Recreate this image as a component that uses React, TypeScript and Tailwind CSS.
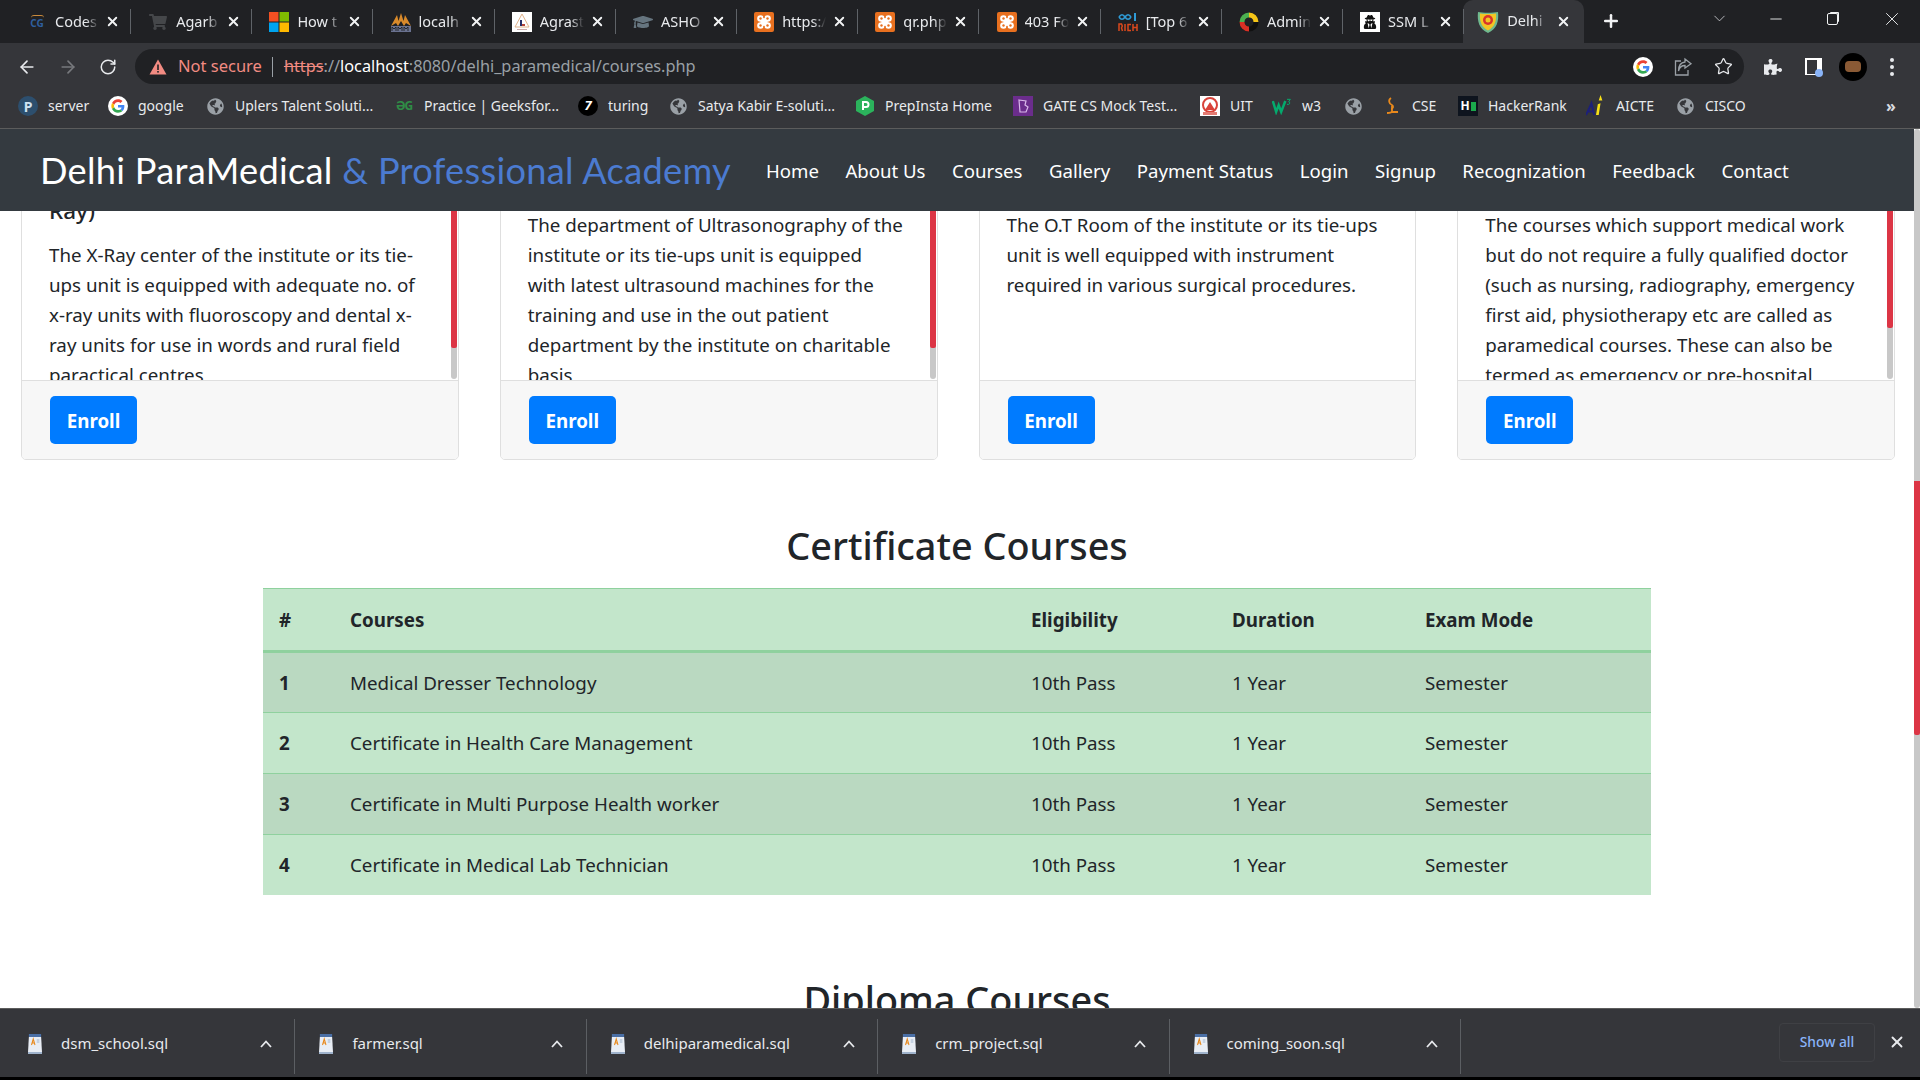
import React from 'react';
import { ArrowLeft, ArrowRight, RotateCw, Star, X, Plus, ChevronDown, Minus } from 'lucide-react';
import { FaGlobeAmericas, FaGraduationCap, FaPuzzlePiece, FaShoppingCart, FaUserSecret } from 'react-icons/fa';

function GoogleG({ size = 20 }: { size?: number }) {
  return (
    <svg width={size} height={size} viewBox="0 0 48 48">
      <circle cx="24" cy="24" r="24" fill="#fff" />
      <g transform="translate(8 8) scale(0.667)">
        <path fill="#EA4335" d="M24 9.5c3.5 0 6.7 1.2 9.2 3.6l6.9-6.9C35.9 2.4 30.5 0 24 0 14.6 0 6.5 5.4 2.6 13.2l8 6.2C12.4 13.7 17.7 9.5 24 9.5z" />
        <path fill="#4285F4" d="M46.9 24.5c0-1.6-.1-3.100-.4-4.500H24v9h12.900c-.6 3-2.200 5.500-4.800 7.200l7.700 6c4.500-4.200 7.100-10.300 7.100-17.700z" />
        <path fill="#FBBC05" d="M10.500 28.600c-.5-1.400-.8-3-.8-4.600s.3-3.200.8-4.600l-8-6.200C.9 16.500 0 20.100 0 24s.9 7.500 2.600 10.800l7.900-6.200z" />
        <path fill="#34A853" d="M24 48c6.500 0 11.900-2.100 15.900-5.800l-7.700-6c-2.100 1.400-4.900 2.300-8.200 2.300-6.300 0-11.600-4.200-13.500-9.900l-8 6.200C6.500 42.600 14.600 48 24 48z" />
      </g>
    </svg>
  );
}

function Xampp() {
  return (
    <svg width="20" height="20" viewBox="0 0 20 20">
      <rect width="20" height="20" rx="2" fill="#e8701f" />
      <g fill="#fff">
        <circle cx="6.500" cy="6.500" r="3.300" />
        <circle cx="13.500" cy="6.500" r="3.300" />
        <circle cx="6.500" cy="13.500" r="3.300" />
        <circle cx="13.500" cy="13.500" r="3.300" />
        <rect x="6.500" y="6.500" width="7" height="7" />
      </g>
      <g fill="#e8701f">
        <circle cx="6.500" cy="6.500" r="1.200" />
        <circle cx="13.500" cy="6.500" r="1.200" />
        <circle cx="6.500" cy="13.500" r="1.200" />
        <circle cx="13.500" cy="13.500" r="1.200" />
        <rect x="9.300" y="2" width="1.400" height="4" />
        <rect x="9.300" y="14" width="1.400" height="4" />
      </g>
    </svg>
  );
}

function Microsoft() {
  return (
    <svg width="20" height="20" viewBox="0 0 20 20">
      <rect width="9.500" height="9.500" fill="#f25022" />
      <rect x="10.500" width="9.500" height="9.500" fill="#7fba00" />
      <rect y="10.500" width="9.500" height="9.500" fill="#00a4ef" />
      <rect x="10.500" y="10.500" width="9.500" height="9.500" fill="#ffb900" />
    </svg>
  );
}

function Pmm() {
  return (
    <svg width="20" height="20" viewBox="0 0 20 20">
      <path d="M0 14 6 3l1.500 6L10 1l2.500 8L14 3l6 11-5-3-2 3-3-5-3 5-2-3z" fill="#d98a2b" />
      <rect x="0" y="14" width="20" height="6" fill="#6a7290" />
      <path d="M1 19v-4l2 2 2-2v4M7 19v-4l2 2 2-2v4M13 19v-4l2 2 2-2v4" stroke="#202124" strokeWidth="0.9" fill="none" />
    </svg>
  );
}

function Agrast() {
  return (
    <svg width="20" height="20" viewBox="0 0 20 20">
      <rect width="20" height="20" fill="#fff" />
      <path d="M10 2 17 15H3z" fill="none" stroke="#e2b48c" strokeWidth="1" />
      <rect x="8" y="8" width="2" height="6" fill="#27306b" />
      <rect x="10" y="12" width="3" height="2" fill="#b5453a" />
      <rect x="5" y="17" width="10" height="1" fill="#caa" />
    </svg>
  );
}

function RichLogo() {
  return (
    <svg width="20" height="20" viewBox="0 0 20 20">
      <path d="M1 5c2-3 4-3 6 0s4 3 6 0" fill="none" stroke="#2f9bd6" strokeWidth="1.600" />
      <path d="M1 5c2 3 4 3 6 0s4-3 6 0" fill="none" stroke="#2f9bd6" strokeWidth="1.600" />
      <rect x="16" y="1" width="2" height="8" fill="#2f9bd6" />
      <path d="M1 19v-7h2.500l.8 2-.8 2 1 3M7 12v7M13 12.500h-3v6h3M15 12v7M19 12v7M15 15.500h4" fill="none" stroke="#d9481c" strokeWidth="1.500" />
    </svg>
  );
}

function AdminRing() {
  return (
    <svg width="20" height="20" viewBox="0 0 20 20">
      <circle cx="10" cy="10" r="7" fill="none" stroke="#111" strokeWidth="5" />
      <path d="M3 10a7 7 0 0 1 7-7" fill="none" stroke="#4caf50" strokeWidth="5" />
      <path d="M10 3a7 7 0 0 1 7 7" fill="none" stroke="#f5c518" strokeWidth="5" />
      <path d="M10 17a7 7 0 0 1-7-7" fill="none" stroke="#d93025" strokeWidth="5" />
      <circle cx="10" cy="10" r="4" fill="#202124" />
    </svg>
  );
}

function Shield() {
  return (
    <svg width="22" height="24" viewBox="0 0 22 24">
      <path d="M1 2c5 1 15 1 20 0 1 9-1 17-10 21C2 19 0 11 1 2z" fill="#6fb98f" />
      <path d="M3 3.500c4 .8 12 .8 16 0 .6 7-1 13.500-8 17-7-3.500-8.600-10-8-17z" fill="#f3c623" />
      <circle cx="11" cy="10" r="5" fill="#d9342b" />
      <circle cx="11" cy="10" r="2.500" fill="#f3c623" />
    </svg>
  );
}

function Box({ children, cls }: { children?: React.ReactNode; cls?: string }) {
  return <span className={'flex items-center justify-center w-5 h-5 shrink-0 ' + (cls || '')}>{children}</span>;
}

const tabs = [
  { title: 'Codes', icon: <span className="relative flex flex-col items-center leading-none text-[10px] font-bold text-[#2f5f9e]"><span className="h-[3px] w-[13px] rounded-t-full border-t border-[#c98a3c]" />CG</span> },
  { title: 'Agarb', icon: <FaShoppingCart size={18} color="#45474a" /> },
  { title: 'How t', icon: <Microsoft /> },
  { title: 'localh', icon: <Pmm /> },
  { title: 'Agrast', icon: <Agrast /> },
  { title: 'ASHO', icon: <FaGraduationCap size={22} color="#66757f" /> },
  { title: 'https:/', icon: <Xampp /> },
  { title: 'qr.php', icon: <Xampp /> },
  { title: '403 Fo', icon: <Xampp /> },
  { title: '[Top 6', icon: <RichLogo /> },
  { title: 'Admin', icon: <AdminRing /> },
  { title: 'SSM L', icon: <span className="flex items-center justify-center w-5 h-5 bg-white"><FaUserSecret size={14} color="#111" /></span> },
];

function Tab({ title, icon }: { title: string; icon: React.ReactNode }) {
  return (
    <div className="flex items-center h-[43px] w-[121.200px] shrink-0 pl-[17px] relative">
      <Box>{icon}</Box>
      <span className="ml-[8px] mr-[5px] mb-[2px] w-[44px] text-[14.500px] leading-[20px] whitespace-nowrap text-[#e8eaed] [mask-image:linear-gradient(to_right,black_70%,transparent_100%)]">{title}</span>
      <X size={15} strokeWidth={3} color="#f1f3f4" className="ml-[1px]" />
      <span className="ml-[10px] w-px h-[25px] bg-[#5f6368]" />
    </div>
  );
}

function TabStrip() {
  return (
    <div className="flex h-[43px] bg-[#202124] pl-[10px]">
      {tabs.map((t) => <Tab key={t.title} title={t.title} icon={t.icon} />)}
      <div className="flex items-center w-[121px] h-[43px] shrink-0 bg-[#35363a] rounded-t-[10px] pl-[14px] ml-[-1px]">
        <Shield />
        <span className="ml-[8px] mb-[2px] w-[40px] whitespace-nowrap text-[14.500px] text-[#e8eaed] [mask-image:linear-gradient(to_right,black_70%,transparent_100%)]">Delhi</span>
        <X size={15} strokeWidth={3} color="#f1f3f4" className="ml-[9px]" />
      </div>
      <Plus size={20} strokeWidth={3} color="#f1f3f4" className="ml-[17px] mt-[11px]" />
      <ChevronDown size={19} strokeWidth={1} color="#dadce0" className="ml-[89px] mt-[9px]" />
      <Minus size={18} strokeWidth={1.200} color="#f1f3f4" className="ml-[38px] mt-[10px]" />
      <span className="ml-[42px] mt-[13px] w-[11px] h-[12px] border border-[#f1f3f4] rounded-[2px] shadow-[2px_-2px_0_-1px_#f1f3f4]" />
      <X size={22} strokeWidth={1} color="#f1f3f4" className="ml-[43px] mt-[8px]" />
    </div>
  );
}

function ShareIcon() {
  return (
    <svg width="20" height="20" viewBox="0 0 20 20" fill="none" stroke="#9aa0a6" strokeWidth="1.300">
      <path d="M8 4H2.500v14H15v-5" />
      <path d="M12 2l6 4.800L12 11V8.500C8.500 8.500 6.500 10 5.500 14c0-5.500 2.500-8.500 6.500-9z" />
    </svg>
  );
}

function Toolbar() {
  return (
    <div className="flex items-center h-[42px] bg-[#35363a] pl-[7px] pt-[5px]">
      <div className="w-[40px] flex justify-center"><ArrowLeft size={20} color="#e8eaed" strokeWidth={2} /></div>
      <div className="w-[41px] flex justify-center"><ArrowRight size={20} color="#77797d" strokeWidth={2} /></div>
      <div className="w-[40px] flex justify-center"><RotateCw size={18} color="#e8eaed" strokeWidth={2} /></div>
      <div className="flex items-center h-[35px] w-[1609px] ml-[7px] rounded-full bg-[#202124] pl-[14px]">
        <svg width="18" height="16" viewBox="0 0 18 16"><path d="M9 0.500 17.500 15.500H0.500z" fill="#f28b82" /><rect x="8.200" y="5.500" width="1.600" height="5.500" fill="#202124" /><rect x="8.200" y="12" width="1.600" height="1.600" fill="#202124" /></svg>
        <span className="ml-[11px] text-[16.500px] text-[#f28b82]">Not secure</span>
        <span className="ml-[10px] w-px h-[20px] bg-[#9aa0a6]" />
        <span className="ml-[11px] text-[16.300px] text-[#9aa0a6] whitespace-nowrap">
          <span className="text-[#f28b82] line-through">https</span>://<span className="text-white">localhost</span>:8080/delhi_paramedical/courses.php
        </span>
        <div className="ml-auto flex items-center pr-px">
          <div className="w-[40px] flex justify-center"><GoogleG size={20} /></div>
          <div className="w-[40px] flex justify-center"><ShareIcon /></div>
          <div className="w-[40px] flex justify-center"><Star size={19} color="#e8eaed" strokeWidth={1.600} /></div>
        </div>
      </div>
      <div className="flex items-center ml-[9px]">
        <div className="w-[40px] flex justify-center"><FaPuzzlePiece size={18} color="#e8eaed" /></div>
        <div className="w-[40px] flex justify-center">
          <span className="relative block w-[17px] h-[17px] bg-white">
            <span className="block w-[10px] h-[14px] bg-[#35363a] mt-[2px] ml-[2px]" />
            <span className="absolute right-[-1px] bottom-[-2px] w-[8px] h-[8px] rounded-full bg-[#8ab4f8]" />
          </span>
        </div>
        <div className="w-[40px] flex justify-center">
          <span className="flex items-center justify-center w-[28px] h-[28px] rounded-full bg-black">
            <span className="w-[16px] h-[11px] rounded-[4px] bg-[#8a5a35]" />
          </span>
        </div>
        <div className="w-[38px] flex flex-col items-center gap-[3px]">
          <span className="w-[4px] h-[4px] rounded-full bg-[#e8eaed]" />
          <span className="w-[4px] h-[4px] rounded-full bg-[#e8eaed]" />
          <span className="w-[4px] h-[4px] rounded-full bg-[#e8eaed]" />
        </div>
      </div>
    </div>
  );
}

const globe = <FaGlobeAmericas size={17} color="#9aa0a6" />;

const bookmarks = [
  { label: 'server', w: 'w-[90px]', icon: <span className="flex items-center justify-center w-[20px] h-[20px] rounded-full bg-[#2d4f6e] text-[14px] font-bold text-[#cfe3f2]">P</span> },
  { label: 'google', w: 'w-[97px]', icon: <GoogleG size={20} /> },
  { label: 'Uplers Talent Soluti...', w: 'w-[189px]', icon: globe },
  { label: 'Practice | Geeksfor...', w: 'w-[184px]', icon: <span className="text-[12px] font-bold text-[#2f8d46] tracking-[-1px]">ƏG</span> },
  { label: 'turing', w: 'w-[90px]', icon: <span className="flex items-center justify-center w-[20px] h-[20px] rounded-full bg-black text-[13px] font-bold italic text-white">7</span> },
  { label: 'Satya Kabir E-soluti...', w: 'w-[187px]', icon: globe },
  { label: 'PrepInsta Home', w: 'w-[158px]', icon: <svg width="18" height="20" viewBox="0 0 18 20"><path d="M9 0l9 5v10l-9 5-9-5V5z" fill="#2bb35c" /><path d="M7 14V6h3a2 2 0 0 1 0 5H7" fill="none" stroke="#fff" strokeWidth="2" /></svg> },
  { label: 'GATE CS Mock Test...', w: 'w-[187px]', icon: <span className="flex items-center justify-center w-[20px] h-[20px] bg-[#6b2d8c]"><svg width="12" height="14" viewBox="0 0 12 14" fill="none" stroke="#d9b8ea" strokeWidth="1.200"><path d="M2 1l7 1-1 4 3 2-2 5-6 0z" /></svg></span> },
  { label: 'UIT', w: 'w-[72px]', icon: <svg width="20" height="20" viewBox="0 0 20 20"><rect width="20" height="20" fill="#fff" /><circle cx="10" cy="9" r="7" fill="none" stroke="#d9433a" strokeWidth="2" /><path d="M5 14l5-8 5 8z" fill="#d9433a" /><rect x="3" y="16" width="14" height="3" fill="#e37b73" /></svg> },
  { label: 'w3', w: 'w-[71px]', icon: <svg width="24" height="18" viewBox="0 0 24 18"><path d="M1 3l4 13 3-8 3 8 5-13" fill="none" stroke="#04aa6d" strokeWidth="3" /><path d="M18 1h4l-2 3c2 0 2 4-2 3" fill="none" stroke="#04aa6d" strokeWidth="1.200" /></svg> },
  { label: '', w: 'w-[39px]', icon: globe },
  { label: 'CSE', w: 'w-[76px]', icon: <svg width="14" height="18" viewBox="0 0 14 18" fill="none" stroke="#e8891c" strokeWidth="1.800"><path d="M6 1C3 3 4 7 7 8c2 1 1 4-1 4M7 8v6c0 2-3 2-5 2M7 15h6" /></svg> },
  { label: 'HackerRank', w: 'w-[128px]', icon: <span className="flex items-center justify-center w-[20px] h-[20px] bg-[#0e141e] gap-px"><span className="text-[12px] leading-none font-bold text-white">H</span><span className="w-[5px] h-[9px] bg-[#1ba94c]" /></span> },
  { label: 'AICTE', w: 'w-[89px]', icon: <svg width="22" height="24" viewBox="0 0 22 24"><path d="M0 22 6 9l3 13M2.500 18h5" fill="none" stroke="#1c1f7a" strokeWidth="2.200" /><path d="M13 10l3-1-2 13h-3zM16 0l2 6-4 0z" fill="#f7e017" /></svg> },
  { label: 'CISCO', w: 'w-[213px]', icon: globe },
];

function Bookmarks() {
  return (
    <div className="flex items-center h-[44px] bg-[#35363a] pl-[18px] border-b border-[#5c5c5c] pb-[1px]">
      {bookmarks.map((b, i) => (
        <div key={i} className={'flex items-center shrink-0 ' + b.w}>
          <span className="flex items-center justify-center w-[20px] h-[22px]">{b.icon}</span>
          {b.label && <span className="ml-[10px] mb-[2px] text-[14px] text-[#e8eaed] whitespace-nowrap">{b.label}</span>}
        </div>
      ))}
      <span className="ml-[-2px] text-[16px] font-bold text-[#dadce0] leading-none">»</span>
    </div>
  );
}

const navLinks = ['Home', 'About Us', 'Courses', 'Gallery', 'Payment Status', 'Login', 'Signup', 'Recognization', 'Feedback', 'Contact'];

function Navbar() {
  return (
    <nav className="flex items-center h-[82px] bg-[#343a40] pl-[40px]">
      <a className="w-[726px] pt-[1px] text-[36.200px] tracking-[0.3px] whitespace-nowrap text-white font-['Lato',sans-serif]">
        Delhi ParaMedical <span className="text-[#4b7bd1]">&amp; Professional Academy</span>
      </a>
      <ul className="flex gap-[26.500px] pt-[2px]">
        {navLinks.map((l) => <li key={l} className="text-[18.600px] text-white whitespace-nowrap">{l}</li>)}
      </ul>
    </nav>
  );
}

const cards = [
  {
    heading: 'Ray)',
    lines: ['The X-Ray center of the institute or its tie-', 'ups unit is equipped with adequate no. of', 'x-ray units with fluoroscopy and dental x-', 'ray units for use in words and rural field', 'paractical centres'],
    thumb: 'h-[167px]',
  },
  {
    lines: ['The department of Ultrasonography of the', 'institute or its tie-ups unit is equipped', 'with latest ultrasound machines for the', 'training and use in the out patient', 'department by the institute on charitable', 'basis'],
    thumb: 'h-[167px]',
  },
  {
    lines: ['The O.T Room of the institute or its tie-ups', 'unit is well equipped with instrument', 'required in various surgical procedures.'],
    thumb: '',
  },
  {
    lines: ['The courses which support medical work', 'but do not require a fully qualified doctor', '(such as nursing, radiography, emergency', 'first aid, physiotherapy etc are called as', 'paramedical courses. These can also be', 'termed as emergency or pre-hospital'],
    thumb: 'h-[147px]',
  },
];

function CourseCard({ heading, lines, thumb }: { heading?: string; lines: string[]; thumb: string }) {
  return (
    <div className="relative border border-[#dfdfdf] rounded-[5px] overflow-hidden bg-white">
      <div className={'h-[199px] overflow-hidden pl-[27px] ' + (heading ? 'pt-[15px]' : 'pt-[29px]')}>
        {heading && <h5 className="h-[44px] text-[22.500px] font-medium leading-[30px] text-[#212529]">{heading}</h5>}
        {lines.map((l) => <p key={l} className="text-[18.750px] leading-[30px] text-[#212529] whitespace-nowrap">{l}</p>)}
      </div>
      {thumb && (
        <div className="absolute right-[1px] top-0 h-[198px] w-[6px] rounded-b-full bg-[#c8c8c8]">
          <div className={'bg-[#dc3545] rounded-b-[2px] ' + thumb} />
        </div>
      )}
      <div className="h-[79px] bg-[#f7f7f7] border-t border-[#dfdfdf] pt-[15px] pl-[28px]">
        <button className="w-[87px] h-[48px] pt-[2px] rounded-[5px] bg-[#007bff] text-[18.750px] font-bold text-white">Enroll</button>
      </div>
    </div>
  );
}

const rows = [
  ['1', 'Medical Dresser Technology'],
  ['2', 'Certificate in Health Care Management'],
  ['3', 'Certificate in Multi Purpose Health worker'],
  ['4', 'Certificate in Medical Lab Technician'],
];

function CertificateTable() {
  return (
    <table className="table-fixed border-collapse w-[1388px] mx-auto bg-[#c3e6cb] text-[18.750px] text-[#212529] [&_td]:pt-[1px] [&_th]:pt-[1px]">
      <thead>
        <tr className="h-[63px] border-t border-b-[3px] border-[#8fd19e]">
          <th className="w-[71px] pl-[16px] text-left font-bold">#</th>
          <th className="w-[681px] pl-[16px] text-left font-bold">Courses</th>
          <th className="w-[201px] pl-[16px] text-left font-bold">Eligibility</th>
          <th className="w-[193px] pl-[16px] text-left font-bold">Duration</th>
          <th className="w-[242px] pl-[16px] text-left font-bold">Exam Mode</th>
        </tr>
      </thead>
      <tbody>
        {rows.map(([n, name], i) => (
          <tr key={n} className={(i === 3 ? 'h-[60px]' : 'h-[61px]') + (i % 2 === 0 ? ' bg-[#bad9c1]' : '') + (i > 0 ? ' border-t border-[#8fd19e]' : '')}>
            <th className="pl-[16px] text-left font-bold">{n}</th>
            <td className="pl-[16px]">{name}</td>
            <td className="pl-[16px]">10th Pass</td>
            <td className="pl-[16px]">1 Year</td>
            <td className="pl-[16px]">Semester</td>
          </tr>
        ))}
      </tbody>
    </table>
  );
}

function FileIcon() {
  return (
    <svg width="14" height="20" viewBox="0 0 16 20" preserveAspectRatio="none">
      <path d="M1 0h14v3H1z" fill="#4a6fa5" />
      <path d="M1 3h14l1 15H0z" fill="#e9eef5" />
      <path d="M0 18h16v2H0z" fill="#9fb3cc" />
      <path d="M4 11l2-6 2 6M5 9h2" stroke="#e8891c" strokeWidth="1.200" fill="none" />
      <path d="M10 6h3M10 8h3" stroke="#9fb3cc" strokeWidth="1" />
    </svg>
  );
}

const downloads = ['dsm_school.sql', 'farmer.sql', 'delhiparamedical.sql', 'crm_project.sql', 'coming_soon.sql'];

function DownloadShelf() {
  return (
    <div className="flex items-center h-[69px] bg-[#35363a] border-t border-[#5c5c5c] pl-[4px]">
      {downloads.map((d) => (
        <div key={d} className="flex items-center h-[55px] w-[291.400px] shrink-0 pl-[24px] pb-[5px] border-r border-[#5c5f63] mt-[6px]">
          <FileIcon />
          <span className="ml-[19px] w-[199px] text-[15px] text-[#e8eaed] whitespace-nowrap">{d}</span>
          <svg width="12" height="8" viewBox="0 0 12 8" fill="none" stroke="#e8eaed" strokeWidth="1.800"><path d="M1 7l5-5.500L11 7" /></svg>
        </div>
      ))}
      <div className="ml-auto flex items-center mb-[2px]">
        <span className="flex items-center justify-center w-[96px] h-[39px] rounded-[4px] border border-[#3f4044] text-[13.800px] font-medium text-[#8ab4f8]">Show all</span>
        <X size={18} strokeWidth={2.500} color="#e8eaed" className="ml-[13px] mr-[14px]" />
      </div>
    </div>
  );
}

export default function App() {
  return (
    <div className="flex flex-col w-[1920px] h-[1080px] overflow-hidden bg-black font-['Noto_Sans',sans-serif]">
      <TabStrip />
      <Toolbar />
      <Bookmarks />
      <div className="flex h-[879px] overflow-hidden bg-white">
        <div className="w-[1914px] shrink-0 flex flex-col">
          <Navbar />
          <main className="flex-1 overflow-hidden">
            <div className="grid grid-cols-4 gap-[41px] pl-[21px] pr-[19px] mt-[-31px]">
              {cards.map((c, i) => <CourseCard key={i} {...c} />)}
            </div>
            <h2 className="mt-[62px] mb-[19px] h-[47px] text-center text-[37.800px] leading-[47px] font-medium text-[#212529]">Certificate Courses</h2>
            <CertificateTable />
            <h2 className="mt-[81px] h-[47px] text-center text-[37.800px] leading-[47px] font-medium text-[#212529]">Diploma Courses</h2>
          </main>
        </div>
        <div className="w-[6px] rounded-full bg-[#c8c8c8]">
          <div className="h-[352px]" />
          <div className="h-[254px] bg-[#dc3545] rounded-b-[2px]" />
        </div>
      </div>
      <DownloadShelf />
    </div>
  );
}
